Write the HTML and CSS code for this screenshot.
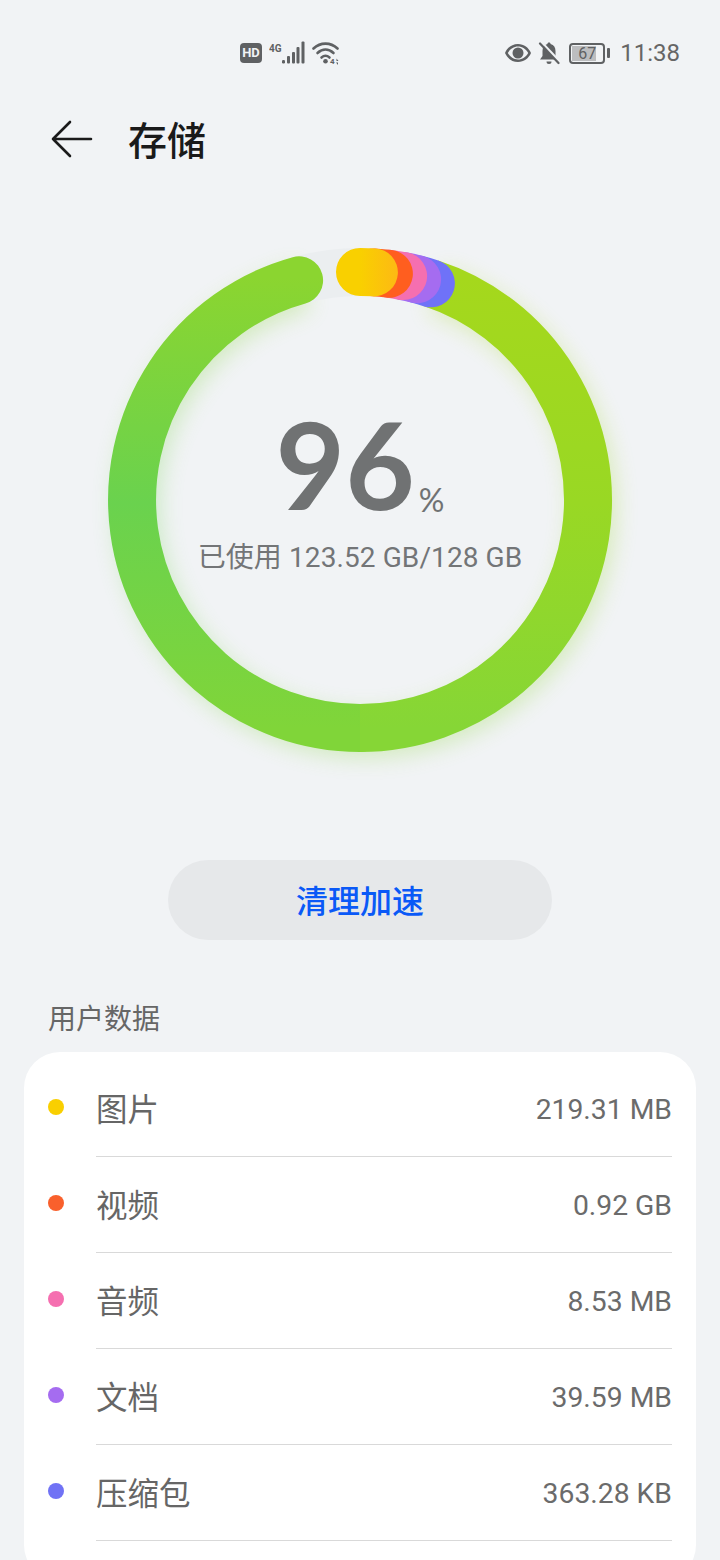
FILE: index.html
```html
<!DOCTYPE html>
<html lang="zh-CN">
<head>
    <meta charset="UTF-8">
    <meta name="viewport" content="width=device-width, initial-scale=1.0">
    <title>存储</title>
    <link rel="stylesheet" href="styles.css">
</head>
<body>
    <div class="status-bar">
        <div class="status-left">
            <span class="hd-badge">HD</span>
            <svg class="net-icon" width="40" height="24" viewBox="0 0 40 24">
                <text x="0" y="11" class="net-label">4G</text>
                <rect x="13" y="19" width="3" height="3.5" rx="1.2"/>
                <rect x="18" y="15" width="3" height="7.5" rx="1"/>
                <rect x="23" y="11" width="3" height="11.5" rx="1"/>
                <rect x="27.500" y="6" width="3" height="16.500" rx="1"/>
                <rect x="32.500" y="0.500" width="3" height="22" rx="1"/>
            </svg>
            <svg class="wifi-icon" width="30" height="24" viewBox="0 0 30 24">
                <path class="wifi-arc" d="M1.500 7.500C8.500 1 18.500 1 25.500 7.500"/>
                <path class="wifi-arc" d="M5.500 12C10.500 7.500 16.500 7.500 21.500 12"/>
                <path class="wifi-arc" d="M9.500 16.500C12 14.300 15 14.300 17.500 16.500"/>
                <circle cx="13.500" cy="20.300" r="2.300"/>
                <text x="18" y="23" class="wifi-label">4</text>
                <path d="M24.500 17.500l2 2.500h-2zM26 24l-2-2.500h2z"/>
            </svg>
        </div>
        <div class="status-right">
            <svg class="eye-icon" width="28" height="20" viewBox="0 0 28 20">
                <path d="M14 1C8 1 3.200 4.800 1 10c2.200 5.200 7 9 13 9s10.800-3.800 13-9C24.800 4.800 20 1 14 1zm0 15.500C9.800 16.500 6 14 3.800 10 6 6 9.800 3.500 14 3.500S22 6 24.200 10C22 14 18.200 16.500 14 16.500z"/>
                <circle cx="14" cy="10" r="5.500"/>
            </svg>
            <svg width="22" height="24" viewBox="0 0 22 24">
                <path d="M11 1.500c-1 0-1.600.7-1.600 1.600C6 4 4.500 6.800 4.500 10v5L2 18.500h15.500L4.500 4.500 17.500 15.500V10c0-3.200-1.500-6-4.900-6.900 0-.9-.6-1.600-1.600-1.600z"/>
                <path d="M8.500 20.500h5a2.500 2.500 0 0 1-5 0z"/>
                <path class="bell-gap" d="M4 1.500l18.500 19.500"/>
                <path class="bell-slash" d="M2 2.500l18.500 19.500"/>
            </svg>
            <div class="battery">
                <div class="battery-body">
                    <div class="battery-fill"></div>
                    <span class="battery-num">67</span>
                </div>
                <div class="battery-nub"></div>
            </div>
            <span class="clock">11:38</span>
        </div>
    </div>

    <div class="app-bar">
        <svg class="back-icon" width="42" height="38" viewBox="0 0 42 38">
            <path d="M19 2L2 19l17 17M2 19h38"/>
        </svg>
        <h1 class="page-title">存储</h1>
    </div>

    <div class="ring-wrap">
        <svg class="ring" width="720" height="620" viewBox="0 0 720 620">
            <defs>
                <linearGradient id="ring-left" gradientUnits="userSpaceOnUse" x1="0" y1="90" x2="0" y2="540">
                    <stop offset="0" stop-color="#8bd530"/>
                    <stop offset="0.5" stop-color="#6ad24e"/>
                    <stop offset="1" stop-color="#80d539"/>
                </linearGradient>
                <linearGradient id="ring-right" gradientUnits="userSpaceOnUse" x1="0" y1="90" x2="0" y2="540">
                    <stop offset="0" stop-color="#a5d81c"/>
                    <stop offset="0.5" stop-color="#99d824"/>
                    <stop offset="1" stop-color="#86d636"/>
                </linearGradient>
                <linearGradient id="ring-yellow" gradientUnits="userSpaceOnUse" x1="360" y1="0" x2="398" y2="0">
                    <stop offset="0" stop-color="#f9d000"/>
                    <stop offset="1" stop-color="#fdb914"/>
                </linearGradient>
                <filter id="ring-glow" filterUnits="userSpaceOnUse" x="40" y="0" width="660" height="620">
                    <feGaussianBlur stdDeviation="11"/>
                </filter>
            </defs>
            <g class="ring-shadow" filter="url(#ring-glow)" transform="translate(5 7)">
                <path stroke="url(#ring-left)" d="M299.100 92.300A228 228 0 0 0 360 540"/>
                <path stroke="url(#ring-right)" d="M430.900 95.300A228 228 0 0 1 360 540"/>
            </g>
            <path class="arc track" d="M299.100 92.300A228 228 0 0 1 360 84"/>
            <path class="arc" stroke="url(#ring-left)" d="M299.100 92.300A228 228 0 0 0 360 540"/>
            <path class="arc butt" stroke="url(#ring-right)" d="M430.900 95.300A228 228 0 0 1 360 540"/>
            <path class="arc" stroke="#6f72f8" d="M417.100 91.300A228 228 0 0 1 430.900 95.300"/>
            <path class="arc" stroke="#a56cf0" d="M403.100 88.100A228 228 0 0 1 417.100 91.300"/>
            <path class="arc" stroke="#f56fb0" d="M388.900 85.800A228 228 0 0 1 403.100 88.100"/>
            <path class="arc" stroke="#ff5e1f" d="M373.900 84.400A228 228 0 0 1 388.900 85.800"/>
            <path class="arc" stroke="url(#ring-yellow)" d="M360 84A228 228 0 0 1 373.900 84.400"/>
        </svg>
        <div class="ring-text">
            <div class="percent"><span class="percent-num">96</span><span class="percent-sign">%</span></div>
            <div class="used">已使用 123.52 GB/128 GB</div>
        </div>
    </div>

    <button class="clean-btn">清理加速</button>

    <div class="section-title">用户数据</div>

    <div class="card">
        <div class="row">
            <span class="dot dot-yellow"></span>
            <div class="row-main"><span class="row-name">图片</span><span class="row-size">219.31 MB</span></div>
        </div>
        <div class="row">
            <span class="dot dot-orange"></span>
            <div class="row-main"><span class="row-name">视频</span><span class="row-size">0.92 GB</span></div>
        </div>
        <div class="row">
            <span class="dot dot-pink"></span>
            <div class="row-main"><span class="row-name">音频</span><span class="row-size">8.53 MB</span></div>
        </div>
        <div class="row">
            <span class="dot dot-purple"></span>
            <div class="row-main"><span class="row-name">文档</span><span class="row-size">39.59 MB</span></div>
        </div>
        <div class="row">
            <span class="dot dot-blue"></span>
            <div class="row-main"><span class="row-name">压缩包</span><span class="row-size">363.28 KB</span></div>
        </div>
    </div>
</body>
</html>
```

FILE: styles.css
```css
body {
    margin: 0;
    width: 720px;
    height: 1560px;
    overflow: hidden;
    background-color: #f1f3f5;
    font-family: Roboto, "Noto Sans CJK SC", sans-serif;
    color: #666;
}

/* status bar */
.status-bar {
    display: flex;
    align-items: center;
    justify-content: space-between;
    height: 24px;
    padding: 41px 40px 23px 240px;
    color: #5f6163;
}
.status-bar svg {
    display: block;
    fill: #5f6163;
}
.status-left,
.status-right {
    display: flex;
    align-items: center;
}
.hd-badge {
    width: 22px;
    height: 20px;
    margin-right: 7px;
    border-radius: 4px;
    background-color: #5f6163;
    color: #f1f3f5;
    font-size: 13px;
    font-weight: 700;
    line-height: 20px;
    text-align: center;
}
.net-icon {
    margin-right: 3px;
}
.net-label {
    font-size: 10px;
    font-weight: 700;
}
.wifi-label {
    font-size: 8px;
    font-weight: 700;
}
.wifi-arc {
    fill: none;
    stroke: #5f6163;
    stroke-width: 2.6;
    stroke-linecap: round;
}
.status-right {
    gap: 8px;
}
.eye-icon {
    margin-right: -2px;
}
.bell-slash {
    stroke: #5f6163;
    stroke-width: 2.200;
    stroke-linecap: round;
    fill: none;
}
.bell-gap {
    stroke: #f1f3f5;
    stroke-width: 2;
    fill: none;
}
.battery {
    display: flex;
    align-items: center;
    gap: 2px;
    margin-left: 1px;
    margin-right: 2px;
}
.battery-body {
    position: relative;
    box-sizing: border-box;
    width: 36px;
    height: 21px;
    padding: 1px;
    border: 2px solid #5f6163;
    border-radius: 4px;
}
.battery-fill {
    width: 80%;
    height: 100%;
    background-color: #bcbdbf;
}
.battery-num {
    position: absolute;
    inset: 0;
    font-size: 16px;
    line-height: 17px;
    text-align: center;
}
.battery-nub {
    width: 3px;
    height: 10px;
    border-radius: 1px;
    background-color: #5f6163;
}
.clock {
    font-size: 24px;
    line-height: 24px;
    color: #666;
}

/* title */
.app-bar {
    display: flex;
    align-items: center;
    height: 100px;
    padding-left: 51px;
}
.back-icon {
    display: block;
    margin-top: 2px;
    fill: none;
    stroke: #1a1a1a;
    stroke-width: 2.600;
    stroke-linecap: round;
    stroke-linejoin: round;
}
.page-title {
    margin: 0 0 0 35px;
    font-size: 39px;
    font-weight: 500;
    color: #1a1a1a;
}

/* ring */
.ring-wrap {
    position: relative;
    height: 620px;
}
.ring {
    display: block;
}
.arc {
    fill: none;
    stroke-width: 48;
    stroke-linecap: round;
}
.butt {
    stroke-linecap: butt;
}
.track {
    stroke: #ebeef0;
}
.ring-shadow {
    fill: none;
    stroke-width: 46;
    opacity: 0.28;
}
.ring-text {
    position: absolute;
    top: 218px;
    left: 0;
    right: 0;
    text-align: center;
}
.percent {
    display: flex;
    justify-content: center;
    align-items: flex-end;
    height: 116px;
    color: #707273;
}
.percent-num {
    font-family: Lato, Roboto, sans-serif;
    font-size: 120px;
    font-weight: 700;
    line-height: 116px;
}
.percent-sign {
    margin: 0 0 2px 4px;
    font-family: Lato, Roboto, sans-serif;
    font-size: 32px;
    line-height: 40px;
}
.used {
    margin-top: 16px;
    font-size: 28px;
    letter-spacing: 0.1px;
    line-height: 40px;
    color: #737577;
}

.clean-btn {
    display: block;
    width: 384px;
    height: 80px;
    margin: 52px auto 0;
    padding: 0 0 2px;
    border: none;
    border-radius: 40px;
    background-color: #e6e8ea;
    color: #0a59f7;
    font-family: inherit;
    font-size: 32px;
    font-weight: 500;
}

.section-title {
    margin: 60px 0 12px 48px;
    font-size: 28px;
    line-height: 40px;
    color: #666;
}

/* list */
.card {
    margin: 0 24px;
    padding: 9px 24px 40px;
    border-radius: 36px;
    background-color: #fff;
}
.row {
    display: flex;
    align-items: center;
    gap: 32px;
}
.dot {
    flex: none;
    width: 16px;
    height: 16px;
    margin-top: -4px;
    border-radius: 50%;
}
.dot-yellow { background-color: #f9cf00; }
.dot-orange { background-color: #f9602c; }
.dot-pink { background-color: #f56fb0; }
.dot-purple { background-color: #a56cf0; }
.dot-blue { background-color: #7072f5; }
.row-main {
    flex: 1;
    display: flex;
    justify-content: space-between;
    align-items: center;
    height: 96px;
    box-sizing: border-box;
    border-bottom: 1px solid #d9d9d9;
}
.row-name {
    padding-bottom: 4px;
    font-size: 31.500px;
    color: #666;
}
.row-size {
    padding-top: 2px;
    font-size: 28.300px;
    color: #6b6b6b;
}
```
